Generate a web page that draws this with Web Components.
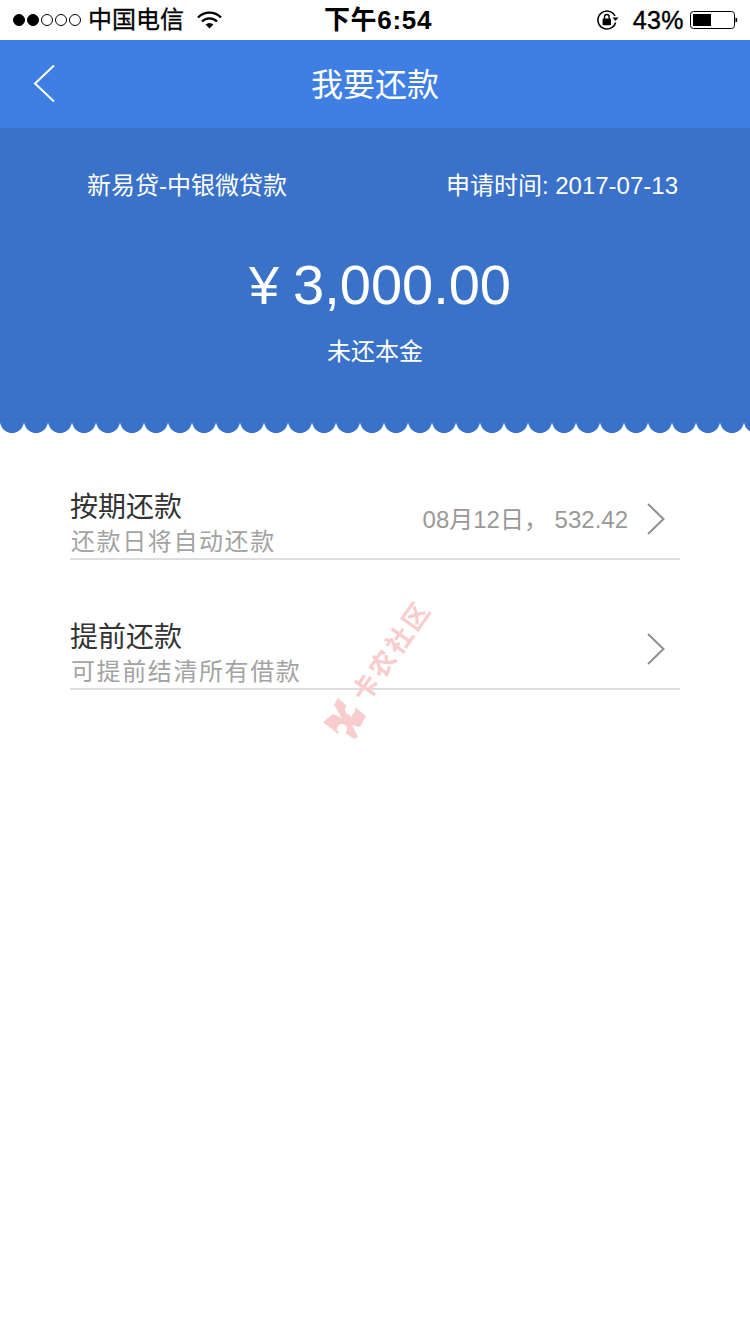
<!DOCTYPE html>
<html lang="zh">
<head>
<meta charset="utf-8">
<title>我要还款</title>
<style>
  html, body { margin: 0; padding: 0; background: #fff; }
  body { width: 750px; height: 1334px; position: relative; overflow: hidden;
    font-family: "Liberation Sans", "Noto Sans CJK SC", sans-serif; }
  .rows { display: flex; flex-direction: column; gap: 58px; padding: 55px 70px 0; }
</style>
</head>
<body>
<status-bar carrier="中国电信" time="下午6:54" battery="43%"></status-bar>
<nav-bar>我要还款</nav-bar>
<loan-summary name="新易贷-中银微贷款" date="申请时间: 2017-07-13" amount="3,000.00" caption="未还本金"></loan-summary>
<div class="rows">
  <repay-row heading="按期还款" note="还款日将自动还款" value="08月12日， 532.42"></repay-row>
  <repay-row heading="提前还款" note="可提前结清所有借款"></repay-row>
</div>
<site-stamp>卡农社区</site-stamp>

<script>
// === <status-bar> ===
class StatusBar extends HTMLElement {
  connectedCallback() {
    const carrier = this.getAttribute('carrier') || '';
    const time = this.getAttribute('time') || '';
    const battery = this.getAttribute('battery') || '';
    this.attachShadow({ mode: 'open' }).innerHTML = `
      <style>
        :host { display: block; height: 40px; background: #fff; color: #000; }
        .bar { height: 40px; display: grid; grid-template-columns: 1fr auto 1fr; align-items: center; padding: 0 11px 0 13px; }
        .left, .right { display: flex; align-items: center; }
        .right { justify-content: flex-end; }
        .dots { display: flex; gap: 2px; margin-right: 7px; }
        .dots i { width: 12px; height: 12px; box-sizing: border-box; border-radius: 50%; border: 1px solid #000; }
        .dots i.on { background: #000; }
        .carrier { font-size: 24px; line-height: 40px; -webkit-text-stroke: .3px #000; }
        .wifi { margin-left: 13px; }
        .time { font-size: 26px; font-weight: 700; line-height: 40px; letter-spacing: .7px; margin-left: 4px; }
        .lock { margin-right: 13px; }
        .pct { font-size: 25px; line-height: 40px; margin-right: 6px; letter-spacing: .4px; -webkit-text-stroke: .4px #000; }
      </style>
      <div class="bar">
        <div class="left">
          <div class="dots"><i class="on"></i><i class="on"></i><i></i><i></i><i></i></div>
          <span class="carrier">${carrier}</span>
          <svg class="wifi" width="25" height="18" viewBox="0 0 25 18">
            <path d="M1 6.500a16 16 0 0 1 23 0" fill="none" stroke="#000" stroke-width="2.400"/>
            <path d="M5 10.500a10.500 10.500 0 0 1 15 0" fill="none" stroke="#000" stroke-width="2.400"/>
            <path d="M8.600 13.600a5.400 5.400 0 0 1 7.800 0L12.500 17.600z" fill="#000"/>
          </svg>
        </div>
        <div class="time">${time}</div>
        <div class="right">
          <svg class="lock" width="24" height="22" viewBox="0 0 24 22">
            <path d="M19.600 13.500A9 9 0 1 1 19 7" fill="none" stroke="#000" stroke-width="1.500"/>
            <path d="M16.500 8.600h6l-3 3.400z" fill="#000"/>
            <rect x="6.600" y="9.600" width="8.400" height="6.600" rx="1" fill="#000"/>
            <path d="M8.500 10V7.800a2.300 2.300 0 0 1 4.600 0V10" fill="none" stroke="#000" stroke-width="1.400"/>
          </svg>
          <span class="pct">${battery}</span>
          <svg width="49" height="20" viewBox="0 0 49 20">
            <rect x=".5" y="1.500" width="44" height="17" rx="3" fill="none" stroke="#000"/>
            <rect x="3" y="4" width="18" height="12" fill="#000"/>
            <path d="M45.500 7.500c1.200 .3 1.800 1.200 1.800 2.500s-.6 2.200-1.800 2.500z" fill="#000"/>
          </svg>
        </div>
      </div>`;
  }
}

// === <nav-bar> ===
class NavBar extends HTMLElement {
  constructor() {
    super();
    this.attachShadow({ mode: 'open' }).innerHTML = `
      <style>
        :host { display: block; height: 88px; background: #3f7ee3; color: #fff; }
        .bar { height: 88px; display: flex; align-items: center; justify-content: center; position: relative; }
        .title { font-size: 32px; line-height: 44px; padding-top: 2px; }
        svg { position: absolute; left: 33px; top: 24px; }
      </style>
      <div class="bar">
        <svg width="23" height="39" viewBox="0 0 23 39"><path d="M21 1.500 2 19.500 21 37.500" fill="none" stroke="#fff" stroke-width="2"/></svg>
        <span class="title"><slot></slot></span>
      </div>`;
  }
}

// === <loan-summary> ===
class LoanSummary extends HTMLElement {
  connectedCallback() {
    const a = n => this.getAttribute(n) || '';
    this.attachShadow({ mode: 'open' }).innerHTML = `
      <style>
        :host { display: block; color: #fff; }
        .panel { height: 292px; box-sizing: border-box; background: #3a72c9; padding: 40px 72px 0 87px; }
        .top { display: flex; justify-content: space-between; font-size: 24px; line-height: 36px; }
        .amount { margin-top: 46px; text-align: center; font-size: 56px; line-height: 70px; padding-right: 5px; }
        .yen { margin-right: 14px; font-size: 54px; }
        .caption { margin-top: 14px; text-align: center; font-size: 24px; line-height: 36px; padding-right: 15px; }
        .edge { height: 13px; background: radial-gradient(circle at 12px 1px, #3a72c9 11.600px, transparent 12.300px) 0 0 / 24px 13px repeat-x; }
      </style>
      <div class="panel">
        <div class="top"><span>${a('name')}</span><span>${a('date')}</span></div>
        <div class="amount"><span class="yen">¥</span>${a('amount')}</div>
        <div class="caption">${a('caption')}</div>
      </div>
      <div class="edge"></div>`;
  }
}

// === <repay-row> ===
class RepayRow extends HTMLElement {
  connectedCallback() {
    const a = n => this.getAttribute(n) || '';
    this.attachShadow({ mode: 'open' }).innerHTML = `
      <style>
        :host { display: block; }
        .row { height: 70px; display: flex; align-items: flex-start; justify-content: space-between; border-bottom: 2px solid #dedede; padding-left: 1px; }
        .heading { font-size: 28px; line-height: 36px; height: 36px; padding-top: 2px; box-sizing: border-box; color: #333; margin-left: -1px; }
        .note { font-size: 24px; line-height: 32px; height: 32px; margin-top: 2px; color: #a3a3a3; letter-spacing: 1.600px; }
        .side { display: flex; align-items: center; height: 62px; padding-right: 15px; }
        .value { font-size: 24px; color: #999; margin-right: 19px; margin-top: -4px; }
        svg { display: block; }
      </style>
      <div class="row">
        <div class="text">
          <div class="heading">${a('heading')}</div>
          <div class="note">${a('note')}</div>
        </div>
        <div class="side">
          <span class="value">${a('value')}</span>
          <svg width="18" height="32" viewBox="0 0 18 32"><path d="M1 1 16.500 16 1 31" fill="none" stroke="#8f8f8f" stroke-width="2"/></svg>
        </div>
      </div>`;
  }
}

// === <site-stamp> watermark over the list ===
class SiteStamp extends HTMLElement {
  constructor() {
    super();
    this.attachShadow({ mode: 'open' }).innerHTML = `
      <style>
        :host { display: block; position: absolute; left: 322px; top: 596px; width: 110px; height: 146px; pointer-events: none; }
        .label { position: absolute; left: 12px; top: 41px; font-size: 26px; line-height: 28px; font-weight: 700; color: #f9cccd; white-space: nowrap; letter-spacing: 3px; transform: rotate(-55deg); }
        svg { position: absolute; left: 0; top: 100px; }
      </style>
      <span class="label"><slot></slot></span>
      <svg width="46" height="44" viewBox="0 0 46 44">
        <path d="M16 2 25 10 29 22 33 11 44 20 38 31 30 29 36 41 32 43 22 36 23 30 16 38 1 26 11 18 20 22 12 9z" fill="#f9cccd"/>
        <circle cx="28" cy="14" r="5" fill="#fff"/>
        <circle cx="20" cy="33" r="5" fill="#fff"/>
      </svg>`;
  }
}

customElements.define('status-bar', StatusBar);
customElements.define('nav-bar', NavBar);
customElements.define('loan-summary', LoanSummary);
customElements.define('repay-row', RepayRow);
customElements.define('site-stamp', SiteStamp);
</script>
</body>
</html>
